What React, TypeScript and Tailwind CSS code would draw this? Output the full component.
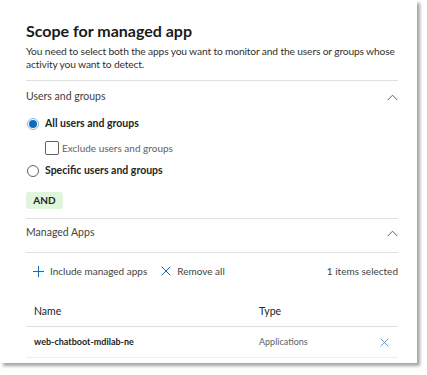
import React from 'react'

const font = { fontFamily: 'Lato, "Open Sans", Arial, sans-serif' }

function ChevronUp() {
    return (
        <svg width="11" height="7" viewBox="0 0 11 7" fill="none">
            <path d="M0.8 6 L5.5 1.2 L10.2 6" stroke="#616161" strokeWidth="1" />
        </svg>
    )
}

function Cross({ size = 10, color = '#0f6cbd' }: { size?: number; color?: string }) {
    return (
        <svg width={size} height={size} viewBox="0 0 10 10" fill="none">
            <path d="M0.7 0.7 L9.3 9.3 M9.3 0.7 L0.7 9.3" stroke={color} strokeWidth="1" />
        </svg>
    )
}

function Plus() {
    return (
        <svg width="11" height="11" viewBox="0 0 11 11" fill="none">
            <path d="M5.5 0 V11 M0 5.5 H11" stroke="#0f6cbd" strokeWidth="1" />
        </svg>
    )
}

export default function App() {
    return (
        <div className="min-h-[375px] w-[427px] bg-white" style={font}>
            <div className="w-[417px] bg-white shadow-[3px_3px_3px_rgba(0,0,0,0.35)] pt-[20px] pl-[26px] pr-[19px] pb-[5px] text-[#242424]">
                <h1 className="h-[22px] text-[16px] leading-[22px] font-bold text-[#1b1b1b]">Scope for managed app</h1>
                <p className="mt-[3px] text-[10.25px] leading-[13px] tracking-[-0.15px] text-[#323130]">
                    You need to select both the apps you want to monitor and the users or groups whose activity you want to detect.
                </p>
                <div className="mt-[9px] border-t border-[#e0e0e0]" />

                <div className="h-[32px] flex items-center justify-between text-[10.5px] text-[#424242]">
                    <span>Users and groups</span>
                    <ChevronUp />
                </div>

                <div className="h-[22px] flex items-center gap-[6px] pl-[1px]">
                    <span className="w-[12px] h-[12px] rounded-full border border-[#8ab4e0] flex items-center justify-center">
                        <span className="w-[8px] h-[8px] rounded-full bg-[#0f6cbd]" />
                    </span>
                    <span className="text-[10.5px] font-bold text-[#242424]">All users and groups</span>
                </div>
                <div className="h-[26px] flex items-center gap-[3px] pl-[19px]">
                    <span className="w-[14px] h-[14px] rounded-[2px] border border-[#616161]" />
                    <span className="text-[10px] text-[#616161]">Exclude users and groups</span>
                </div>
                <div className="h-[20px] flex items-center gap-[6px] pl-[1px]">
                    <span className="w-[12px] h-[12px] rounded-full border border-[#616161]" />
                    <span className="text-[10.5px] font-bold text-[#242424]">Specific users and groups</span>
                </div>

                <div className="mt-[11px] w-[37px] h-[17px] rounded-[3px] bg-[#dff6dd] flex items-center justify-center text-[10px] font-bold text-[#242424]">
                    AND
                </div>
                <div className="mt-[9px] border-t border-[#e0e0e0]" />

                <div className="h-[33px] pb-[5px] flex items-center justify-between text-[10.5px] text-[#424242]">
                    <span>Managed Apps</span>
                    <ChevronUp />
                </div>
                <div className="border-t border-[#e0e0e0]" />

                <div className="h-[36px] flex items-center text-[10px] text-[#424242]">
                    <div className="flex items-center gap-[6px] pl-[7px]">
                        <Plus />
                        <span>Include managed apps</span>
                    </div>
                    <div className="flex items-center gap-[6px] ml-[14px]">
                        <Cross size={10} />
                        <span>Remove all</span>
                    </div>
                    <span className="ml-auto text-[#424242]">1 items selected</span>
                </div>

                <div className="h-[37px] pt-[8px] flex items-center text-[10.5px] text-[#242424]">
                    <span className="pl-[8px] w-[233px]">Name</span>
                    <span>Type</span>
                </div>
                <div className="border-t border-[#e0e0e0]" />
                <div className="h-[30px] flex items-center">
                    <span className="pl-[8px] w-[233px] text-[9px] font-bold text-[#242424]">web-chatboot-mdilab-ne</span>
                    <span className="text-[9px] text-[#616161]">Applications</span>
                    <span className="ml-auto mr-[9px]"><Cross size={9} color="#5b8fc7" /></span>
                </div>
                <div className="border-t border-[#eeeeee]" />
            </div>
        </div>
    )
}
